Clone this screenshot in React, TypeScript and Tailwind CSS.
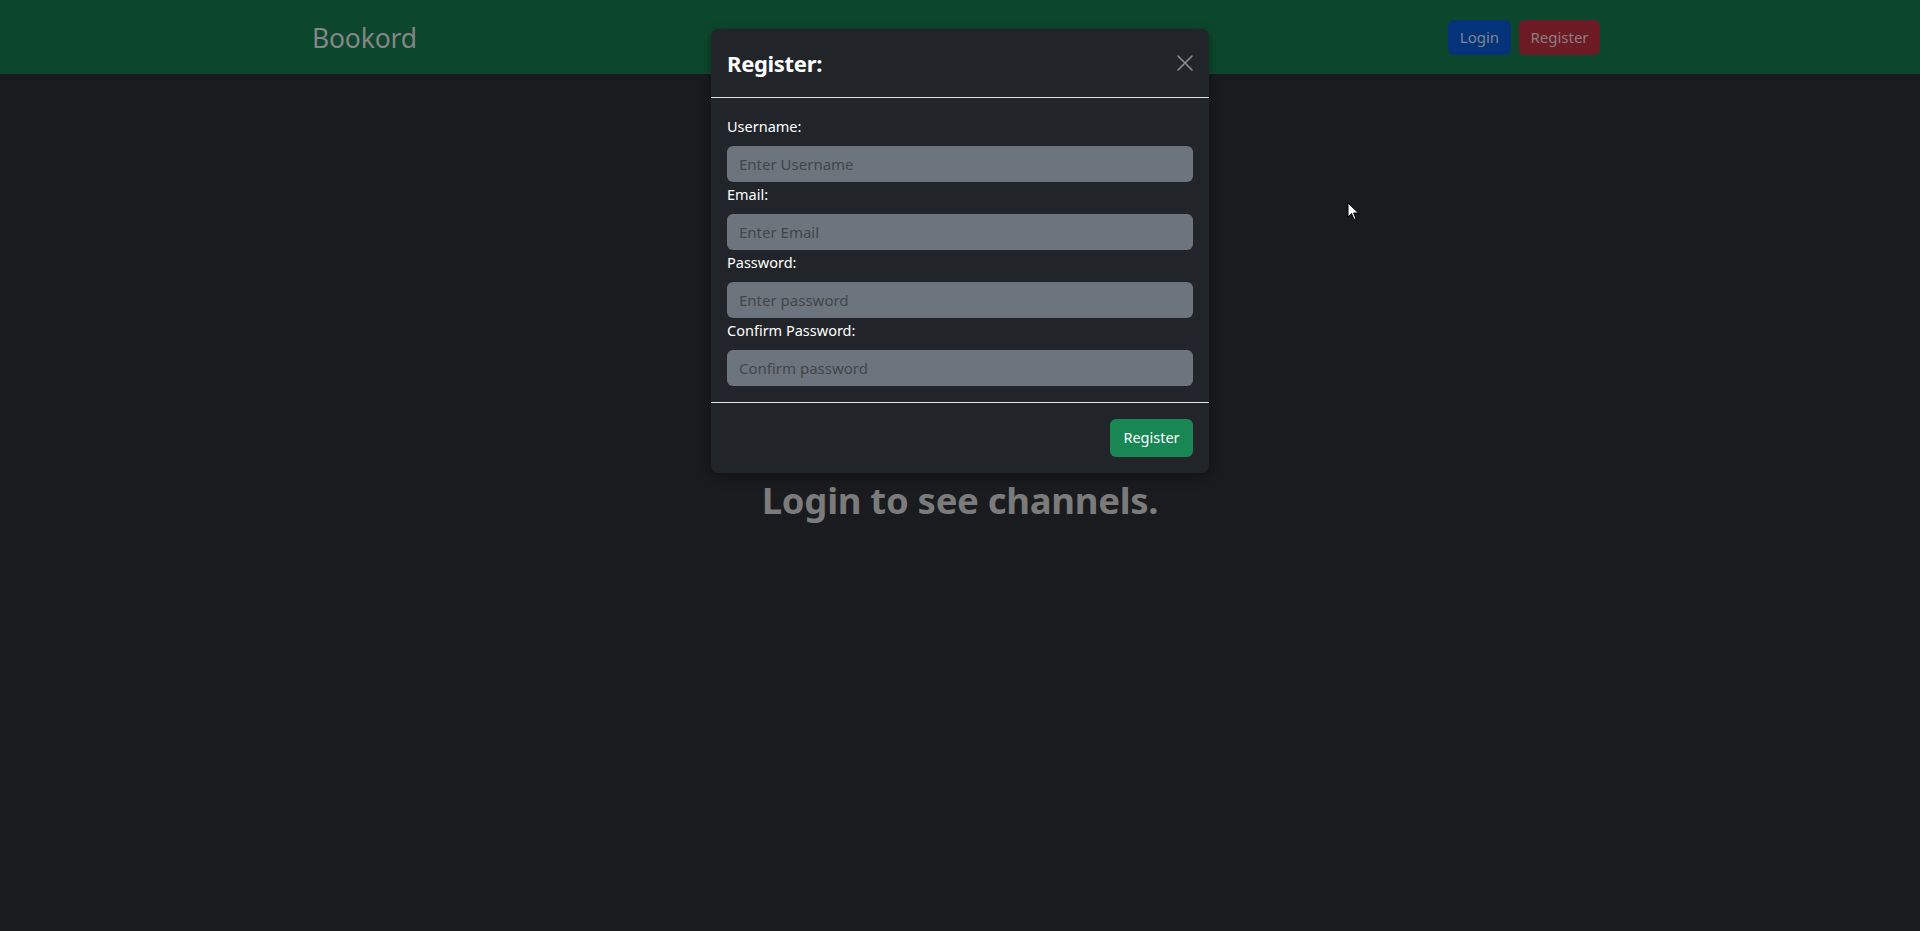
import React from 'react'

const font = { fontFamily: '"Noto Sans", "Open Sans", sans-serif' }

const fields = [
  { label: 'Username:', placeholder: 'Enter Username', type: 'text' },
  { label: 'Email:', placeholder: 'Enter Email', type: 'email' },
  { label: 'Password:', placeholder: 'Enter password', type: 'password' },
  { label: 'Confirm Password:', placeholder: 'Confirm password', type: 'password' },
]

const Navbar = () => (
  <nav className="h-[74px] bg-[#0c472d]">
    <div className="mx-auto flex h-full max-w-[1320px] items-center justify-between px-[12px]">
      <a className="pt-[3px] text-[26.5px] text-[#858585] tracking-[-0.2px]">Bookord</a>
      <div className="mr-[8px] flex items-center gap-[8px]">
        <button className="h-[35px] w-[63px] rounded-[6px] bg-[#05337a] text-[15px] text-[#7f8590]">
          Login
        </button>
        <button className="h-[35px] w-[81px] rounded-[6px] bg-[#6c1a23] text-[15px] text-[#8a7f82]">
          Register
        </button>
      </div>
    </div>
  </nav>
)

const RegisterModal = () => (
  <div className="absolute left-[711px] top-[29px] w-[498px] rounded-[8px] bg-[#212529] shadow-[0_4px_12px_rgba(0,0,0,0.35)]">
    <div className="flex h-[69px] items-center justify-between border-b border-[#dee2e6] px-[16px]">
      <h4 className="text-[22px] font-bold text-white tracking-[-0.3px]">Register:</h4>
      <button className="flex h-[16px] w-[16px] items-center justify-center">
        <svg width="16" height="16" viewBox="0 0 16 16">
          <path d="M1 1 L15 15 M15 1 L1 15" stroke="#8b8e92" strokeWidth="1.6" strokeLinecap="round" />
        </svg>
      </button>
    </div>
    <form className="px-[16px] pb-[16px] pt-[16px]">
      {fields.map((f) => (
        <div key={f.label}>
          <label className="block h-[32px] text-[14.5px] leading-[24px] text-white">{f.label}</label>
          <input
            type={f.type}
            placeholder={f.placeholder}
            className="block h-[36px] w-full rounded-[6px] bg-[#6c757d] px-[12px] text-[15px] text-white outline-none placeholder:text-[#40464c]"
          />
        </div>
      ))}
    </form>
    <div className="flex justify-end border-t border-[#dee2e6] px-[16px] pb-[16px] pt-[16px]">
      <button className="h-[38px] w-[83px] rounded-[6px] bg-[#198754] text-[14.5px] text-white">
        Register
      </button>
    </div>
  </div>
)

const Cursor = () => (
  <svg className="absolute left-[1347px] top-[202px]" width="13" height="19" viewBox="0 0 13 19">
    <path d="M1 1 L1 15 L4.5 11.5 L7 17.5 L9 16.6 L6.6 11 L11.5 11 Z" fill="#fff" stroke="#000" strokeWidth="1" />
  </svg>
)

export default function App() {
  return (
    <div className="relative h-[931px] w-full overflow-hidden bg-[#1a1b1e]" style={font}>
      <Navbar />
      <main className="flex flex-col items-center pt-[399px]">
        <h2 className="text-[36.5px] font-bold text-[#7b7b7b] tracking-[-0.3px]">Login to see channels.</h2>
      </main>
      <RegisterModal />
      <Cursor />
    </div>
  )
}
